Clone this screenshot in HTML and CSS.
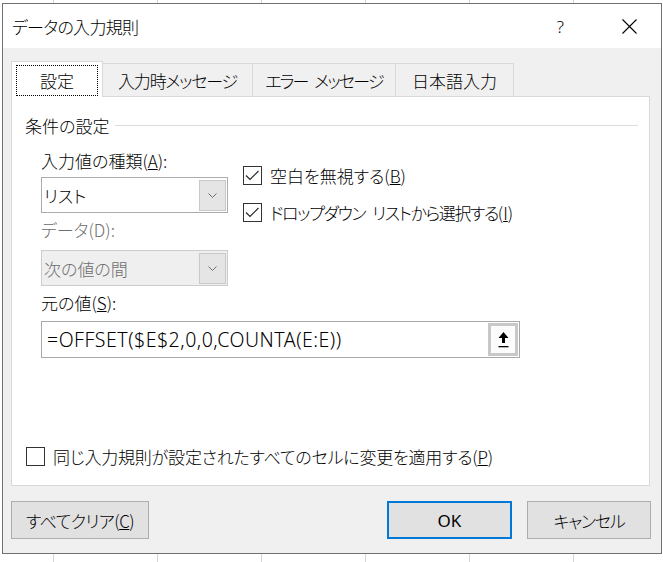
FILE: index.html
```html
<!DOCTYPE html>
<html lang="ja">
<head>
<meta charset="utf-8">
<title>データの入力規則</title>
<link rel="stylesheet" href="styles.css">
</head>
<body>
<div class="dialog">
  <div class="titlebar">
    <span class="title">データの入力規則</span>
    <span class="help">?</span>
    <span class="close"><svg width="15" height="15" viewBox="0 0 15 15"><path d="M0.5 0.5 L14.5 14.5 M14.5 0.5 L0.5 14.5" stroke="#000" stroke-width="1.1" fill="none"/></svg></span>
  </div>
  <div class="content">
    <div class="tabs">
      <div class="tab active"><span class="focus">設定</span></div>
      <div class="tab t2">入力時メッセージ</div>
      <div class="tab t3">エラー&#8194;メッセージ</div>
      <div class="tab t4">日本語入力</div>
    </div>
    <div class="panel">
      <div class="group-head"><span class="group-label">条件の設定</span><i class="rule"></i></div>
      <div class="form">
        <div class="row">
          <div class="col-left">
            <div class="label l1">入力値の種類(<u>A</u>):</div>
            <div class="combo">
              <span class="combo-text">リスト</span>
              <span class="combo-btn"><svg width="9" height="5" viewBox="0 0 9 5"><path d="M0.5 0.5 L4.5 4.5 L8.5 0.5" stroke="#707070" stroke-width="1" fill="none"/></svg></span>
            </div>
            <div class="label l2 disabled">データ(D):</div>
            <div class="combo combo-disabled">
              <span class="combo-text">次の値の間</span>
              <span class="combo-btn"><svg width="9" height="5" viewBox="0 0 9 5"><path d="M0.5 0.5 L4.5 4.5 L8.5 0.5" stroke="#707070" stroke-width="1" fill="none"/></svg></span>
            </div>
          </div>
          <div class="col-right">
            <div class="check"><span class="box"><svg width="17" height="17" viewBox="0 0 17 17"><path d="M2 8.5 L6 12.5 L14.5 4" stroke="#262626" stroke-width="1.2" fill="none"/></svg></span><span>空白を無視する(<u>B</u>)</span></div>
            <div class="check c2"><span class="box"><svg width="17" height="17" viewBox="0 0 17 17"><path d="M2 8.5 L6 12.5 L14.5 4" stroke="#262626" stroke-width="1.2" fill="none"/></svg></span><span class="tight">ドロップダウン&#8194;リストから選択する</span><span>(<u>I</u>)</span></div>
          </div>
        </div>
        <div class="label l3">元の値(<u>S</u>):</div>
        <div class="source">
          <span class="source-text">=OFFSET($E$2,0,0,COUNTA(E:E))</span>
          <span class="collapse"><svg width="11" height="16" viewBox="0 0 11 16"><polygon points="5.5,0 10.5,6 7,6 7,11 4,11 4,6 0.5,6" fill="#000"/><rect x="0.5" y="14" width="10" height="1.3" fill="#000"/></svg></span>
        </div>
      </div>
      <div class="check bottom"><span class="box"></span><span class="slight">同じ入力規則が設定されたすべてのセルに変更を適用する(<u>P</u>)</span></div>
    </div>
    <div class="footer">
      <button class="btn clear">すべてクリア(<u>C</u>)</button>
      <span class="spacer"></span>
      <button class="btn ok">OK</button>
      <button class="btn cancel">キャンセル</button>
    </div>
  </div>
</div>
</body>
</html>
```

FILE: styles.css
```css
html, body {
  margin: 0;
  padding: 0;
}
body {
  width: 663px;
  height: 562px;
  overflow: hidden;
  background-color: #fff;
  background-image: repeating-linear-gradient(to right, transparent 0, transparent 53px, #d4d4d4 53px, #d4d4d4 54px, transparent 54px, transparent 104px);
  font-family: "Noto Sans CJK JP", "Noto Sans", sans-serif;
  font-size: 17px;
  font-weight: 300;
  font-feature-settings: "palt";
  color: #000;
}
.dialog {
  box-sizing: border-box;
  width: 660px;
  height: 551px;
  margin: 3px 0 0 2px;
  border: 1px solid #707070;
  background: #f0f0f0;
  display: flex;
  flex-direction: column;
}
.titlebar {
  height: 44px;
  background: #fff;
  display: flex;
  align-items: center;
  padding-left: 9px;
}
.title {
  flex: 1;
  font-size: 17px;
  letter-spacing: -0.7px;
}
.help {
  font-family: "Noto Sans", sans-serif;
  font-size: 17px;
  margin-right: 58px;
}
.close {
  display: flex;
  margin-right: 24px;
}
.content {
  flex: 1;
  display: flex;
  flex-direction: column;
  padding: 13px 10px 0 8px;
}
.tabs {
  display: flex;
  align-items: flex-end;
  height: 36px;
  margin-bottom: -1px;
}
.tab {
  box-sizing: border-box;
  height: 34px;
  border: 1px solid #d9d9d9;
  border-bottom: none;
  background: #f0f0f0;
  display: flex;
  align-items: center;
  justify-content: center;
  margin-left: -1px;
  white-space: nowrap;
}
.tab.active {
  margin-left: 0;
  width: 92px;
  height: 36px;
  background: #fff;
  position: relative;
  z-index: 1;
  padding: 3px 4px 1px;
}
.focus {
  box-sizing: border-box;
  width: 100%;
  height: 100%;
  border: 1px dotted #000;
  display: flex;
  align-items: center;
  justify-content: center;
}
.t2 { width: 151px; letter-spacing: -1.2px; }
.t3 { width: 144px; letter-spacing: -1.8px; }
.t4 { width: 119px; }
.panel {
  box-sizing: border-box;
  width: 639px;
  height: 390px;
  border: 1px solid #d9d9d9;
  background: #fff;
  display: flex;
  flex-direction: column;
}
.group-head {
  display: flex;
  align-items: center;
  height: 22px;
  margin-top: 17px;
  padding-left: 13px;
}
.rule {
  flex: 1;
  height: 1px;
  background: #dcdcdc;
  margin: 0 11px 0 6px;
}
.form {
  padding-left: 29px;
}
.row {
  display: flex;
}
.col-left {
  width: 187px;
}
.col-right {
  margin-left: 15px;
  padding-top: 28px;
}
.label {
  height: 22px;
  line-height: 22px;
  white-space: nowrap;
}
.l1 { margin-top: 14px; }
.l2 { margin-top: 6px; }
.l3 { margin-top: 6px; }
.disabled { color: #6d6d6d; }
.combo {
  box-sizing: border-box;
  height: 36px;
  margin-top: 5px;
  border: 1px solid #acacac;
  background: #fff;
  display: flex;
  align-items: stretch;
  padding: 2px 1px 1px 2px;
}
.combo-disabled {
  margin-top: 9px;
  background: #efefef;
  border-color: #cccccc;
  color: #6d6d6d;
}
.combo-text {
  flex: 1;
  display: flex;
  align-items: center;
}
.combo-btn {
  box-sizing: border-box;
  width: 27px;
  background: #e5e5e5;
  border: 1px solid #c9c9c9;
  display: flex;
  align-items: center;
  justify-content: center;
}
.check {
  display: flex;
  align-items: center;
  height: 22px;
  white-space: nowrap;
}
.c2 { margin-top: 15px; }
.tight { letter-spacing: -1.4px; }
.slight { letter-spacing: -0.2px; }
.box {
  box-sizing: border-box;
  width: 19px;
  height: 19px;
  border: 1px solid #333;
  background: #fff;
  margin-right: 8px;
  display: flex;
  align-items: center;
  justify-content: center;
}
.source {
  box-sizing: border-box;
  width: 479px;
  height: 37px;
  margin-top: 7px;
  border: 1px solid #a9a9a9;
  background: #fff;
  display: flex;
  align-items: center;
  padding: 1px 1px 1px 5px;
}
.source-text {
  flex: 1;
  font-family: "Noto Sans", sans-serif;
  font-weight: 300;
  font-size: 19.5px;
  letter-spacing: 0.5px;
}
.collapse {
  box-sizing: border-box;
  width: 30px;
  height: 33px;
  border: 3px solid #c8c8c8;
  background: #fcfcfc;
  display: flex;
  align-items: center;
  justify-content: center;
}
.check.bottom {
  margin-top: auto;
  margin-bottom: 18px;
  padding-left: 14px;
}
.footer {
  display: flex;
  margin-top: 15px;
}
.spacer { flex: 1; }
.btn {
  box-sizing: border-box;
  height: 38px;
  border: 1px solid #adadad;
  background: #e1e1e1;
  font: inherit;
  color: #000;
  padding: 0;
}
.clear { width: 138px; letter-spacing: -0.5px; }
.ok {
  width: 125px;
  border: 2px solid #0078d7;
  font-family: "Noto Sans", sans-serif;
  font-weight: 400;
}
.cancel {
  width: 124px;
  margin-left: 15px;
  letter-spacing: -1.2px;
}
```
